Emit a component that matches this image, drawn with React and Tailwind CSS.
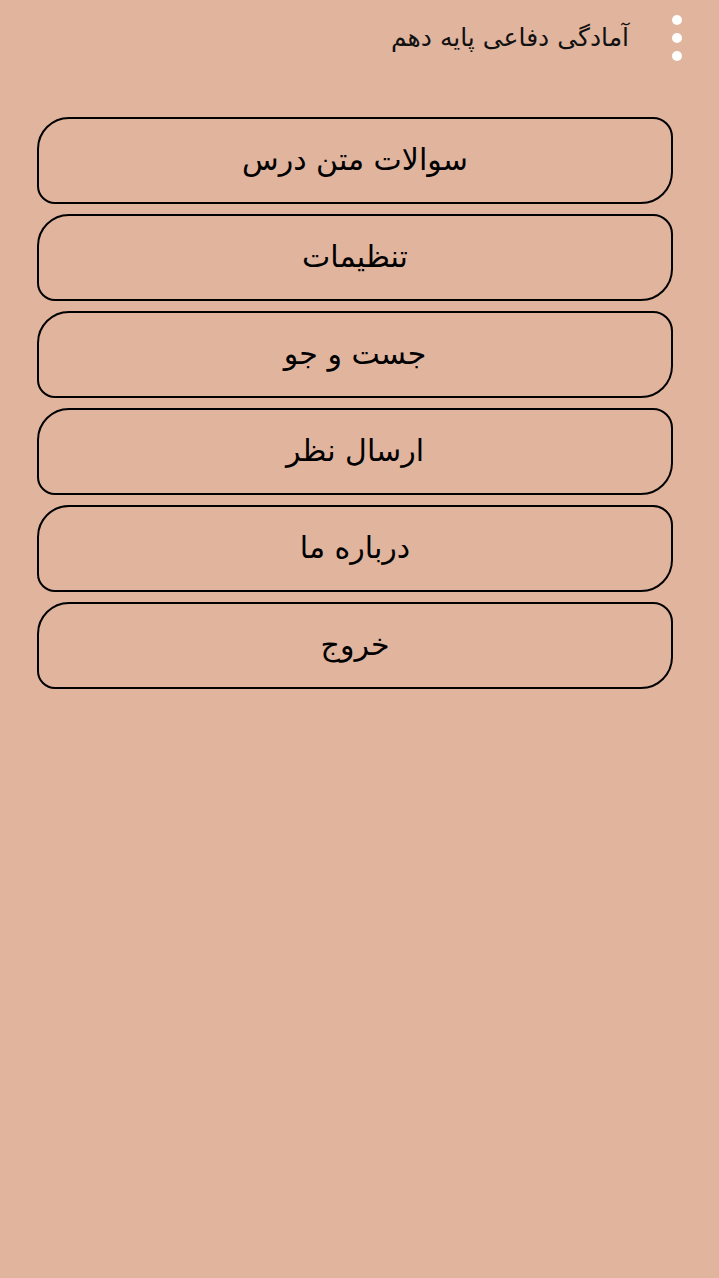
import React from "react";

const items = ["سوالات متن درس", "تنظیمات", "جست و جو", "ارسال نظر", "درباره ما", "خروج"];

const MenuButton = ({ label }) => (
  <button
    type="button"
    className="flex h-[87px] w-full items-center justify-center pb-[3px] border-2 border-black rounded-tl-[32px] rounded-br-[32px] rounded-tr-[20px] rounded-bl-[18px] text-[30px] text-black"
  >
    {label}
  </button>
);

export default function App() {
  return (
    <div
      dir="rtl"
      className="min-h-[1278px] w-full bg-[#e1b49e]"
      style={{ fontFamily: '"DejaVu Sans", "Noto Sans", sans-serif' }}
    >
      <div className="flex h-[75px] items-center">
        <div className="flex w-[90px] flex-col items-center gap-[8px] pt-[1px] pl-[6px]">
          <span className="h-[10px] w-[10px] rounded-full bg-white" />
          <span className="h-[10px] w-[10px] rounded-full bg-white" />
          <span className="h-[10px] w-[10px] rounded-full bg-white" />
        </div>
        <h1 className="text-[25px] text-[#111]">آمادگی دفاعی پایه دهم</h1>
      </div>
      <div className="mr-[46px] ml-[37px] mt-[42px] flex flex-col gap-[10px]">
        {items.map((item) => (
          <MenuButton key={item} label={item} />
        ))}
      </div>
    </div>
  );
}
